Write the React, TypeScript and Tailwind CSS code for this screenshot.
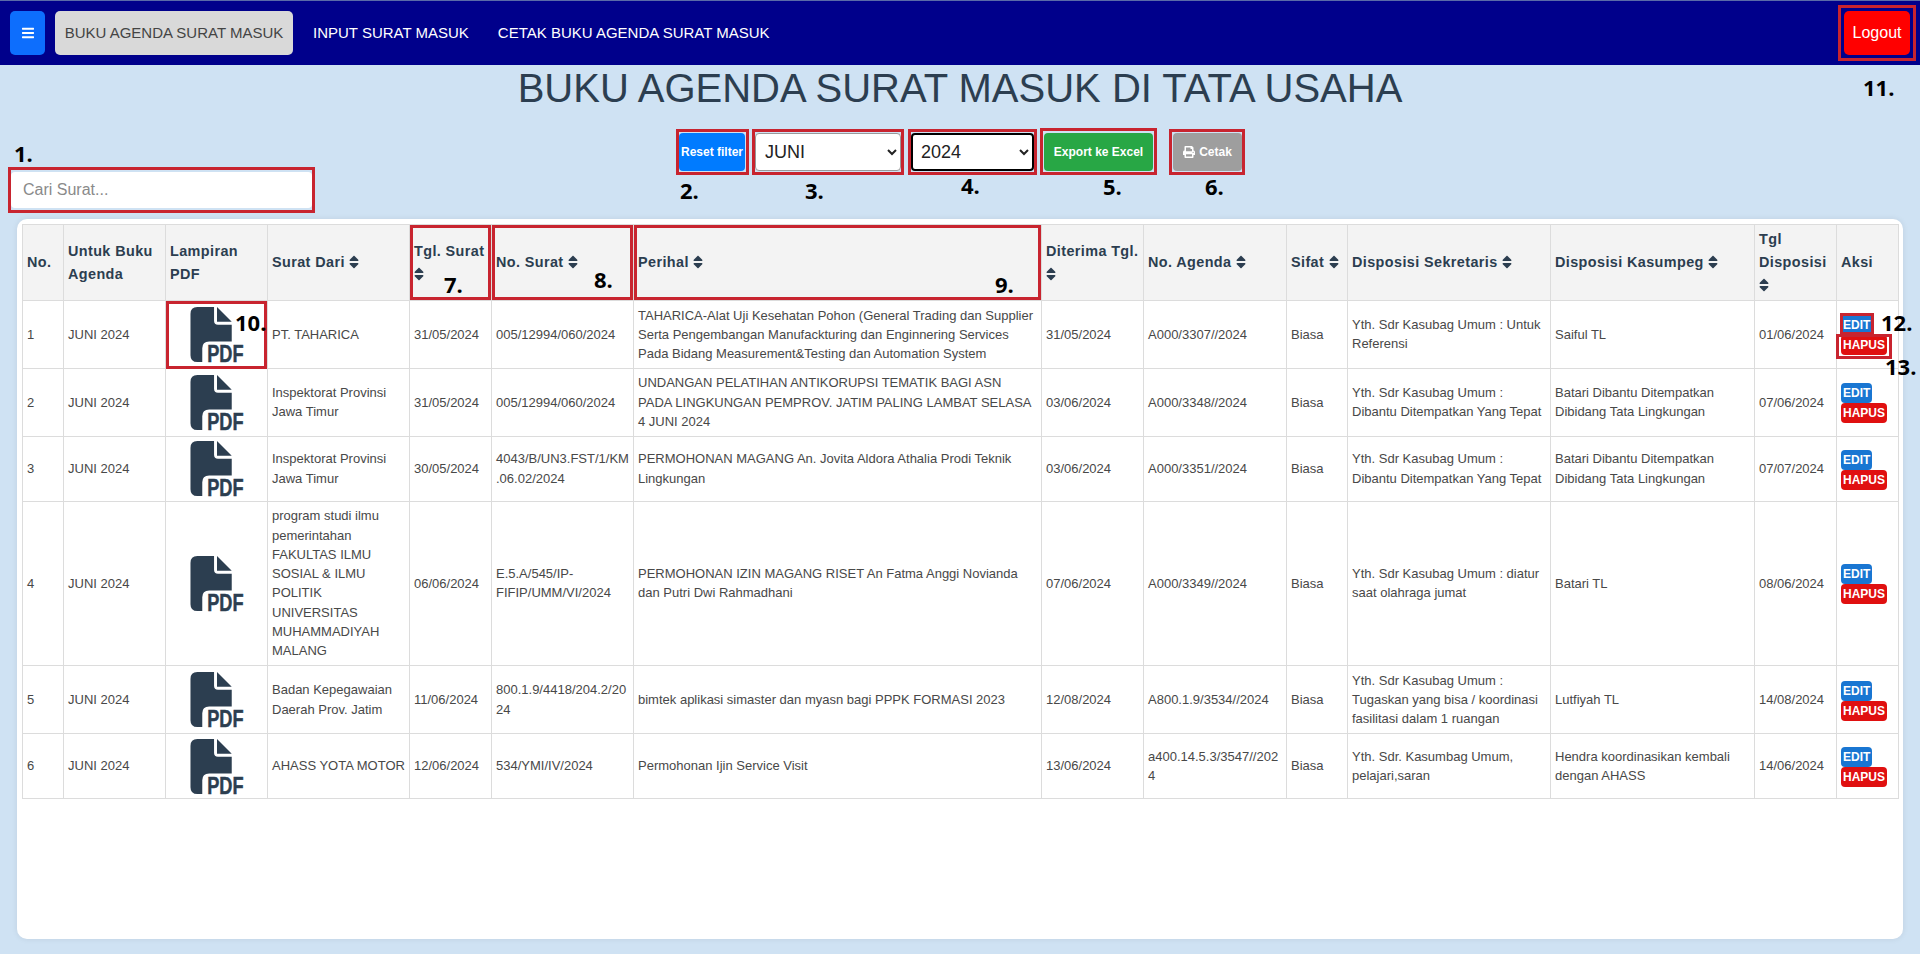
import { FaBars, FaPrint, FaSort } from "react-icons/fa";

type Row = {
  no: number;
  dari: string;
  tgl: string;
  noSurat: string;
  perihal: string;
  diterima: string;
  agenda: string;
  sekretaris: string;
  kasumpeg: string;
  tglDisposisi: string;
};

const rows: Row[] = [
  {
    no: 1,
    dari: "PT. TAHARICA",
    tgl: "31/05/2024",
    noSurat: "005/12994/060/2024",
    perihal:
      "TAHARICA-Alat Uji Kesehatan Pohon (General Trading dan Supplier Serta Pengembangan Manufackturing dan Enginnering Services Pada Bidang Measurement&Testing dan Automation System",
    diterima: "31/05/2024",
    agenda: "A000/3307//2024",
    sekretaris: "Yth. Sdr Kasubag Umum : Untuk Referensi",
    kasumpeg: "Saiful TL",
    tglDisposisi: "01/06/2024",
  },
  {
    no: 2,
    dari: "Inspektorat Provinsi Jawa Timur",
    tgl: "31/05/2024",
    noSurat: "005/12994/060/2024",
    perihal:
      "UNDANGAN PELATIHAN ANTIKORUPSI TEMATIK BAGI ASN PADA LINGKUNGAN PEMPROV. JATIM PALING LAMBAT SELASA 4 JUNI 2024",
    diterima: "03/06/2024",
    agenda: "A000/3348//2024",
    sekretaris: "Yth. Sdr Kasubag Umum : Dibantu Ditempatkan Yang Tepat",
    kasumpeg: "Batari Dibantu Ditempatkan Dibidang Tata Lingkungan",
    tglDisposisi: "07/06/2024",
  },
  {
    no: 3,
    dari: "Inspektorat Provinsi Jawa Timur",
    tgl: "30/05/2024",
    noSurat: "4043/B/UN3.FST/1/KM.06.02/2024",
    perihal: "PERMOHONAN MAGANG An. Jovita Aldora Athalia Prodi Teknik Lingkungan",
    diterima: "03/06/2024",
    agenda: "A000/3351//2024",
    sekretaris: "Yth. Sdr Kasubag Umum : Dibantu Ditempatkan Yang Tepat",
    kasumpeg: "Batari Dibantu Ditempatkan Dibidang Tata Lingkungan",
    tglDisposisi: "07/07/2024",
  },
  {
    no: 4,
    dari: "program studi ilmu pemerintahan FAKULTAS ILMU SOSIAL & ILMU POLITIK UNIVERSITAS MUHAMMADIYAH MALANG",
    tgl: "06/06/2024",
    noSurat: "E.5.A/545/IP-FIFIP/UMM/VI/2024",
    perihal: "PERMOHONAN IZIN MAGANG RISET An Fatma Anggi Novianda dan Putri Dwi Rahmadhani",
    diterima: "07/06/2024",
    agenda: "A000/3349//2024",
    sekretaris: "Yth. Sdr Kasubag Umum : diatur saat olahraga jumat",
    kasumpeg: "Batari TL",
    tglDisposisi: "08/06/2024",
  },
  {
    no: 5,
    dari: "Badan Kepegawaian Daerah Prov. Jatim",
    tgl: "11/06/2024",
    noSurat: "800.1.9/4418/204.2/2024",
    perihal: "bimtek aplikasi simaster dan myasn bagi PPPK FORMASI 2023",
    diterima: "12/08/2024",
    agenda: "A800.1.9/3534//2024",
    sekretaris: "Yth. Sdr Kasubag Umum : Tugaskan yang bisa / koordinasi fasilitasi dalam 1 ruangan",
    kasumpeg: "Lutfiyah TL",
    tglDisposisi: "14/08/2024",
  },
  {
    no: 6,
    dari: "AHASS YOTA MOTOR",
    tgl: "12/06/2024",
    noSurat: "534/YMI/IV/2024",
    perihal: "Permohonan Ijin Service Visit",
    diterima: "13/06/2024",
    agenda: "a400.14.5.3/3547//2024",
    sekretaris: "Yth. Sdr. Kasumbag Umum, pelajari,saran",
    kasumpeg: "Hendra koordinasikan kembali dengan AHASS",
    tglDisposisi: "14/06/2024",
  },
];

const th = "border border-[#dcdcdc] bg-[#f3f3f3] px-[4px] py-[3px] text-left align-middle font-bold";
const td = "border border-[#dcdcdc] px-[4px] py-[4.5px] align-middle";

const boxes = [
  "left-[8px] top-[167px] w-[307px] h-[46px]",
  "left-[676px] top-[129px] w-[73px] h-[46px]",
  "left-[752px] top-[129px] w-[152px] h-[46px]",
  "left-[908px] top-[129px] w-[129px] h-[46px]",
  "left-[1040px] top-[128px] w-[117px] h-[47px]",
  "left-[1169px] top-[129px] w-[76px] h-[46px]",
  "left-[410px] top-[225px] w-[81px] h-[75px]",
  "left-[492px] top-[225px] w-[141px] h-[75px]",
  "left-[634px] top-[225px] w-[407px] h-[75px]",
  "left-[166px] top-[301px] w-[101px] h-[68px]",
  "left-[1838px] top-[5px] w-[78px] h-[56px]",
  "left-[1840px] top-[313px] w-[34px] h-[22px]",
  "left-[1836px] top-[334px] w-[56px] h-[25px]",
];

const labels = [
  { text: "1.", pos: "left-[14px] top-[140px]" },
  { text: "2.", pos: "left-[680px] top-[177px]" },
  { text: "3.", pos: "left-[805px] top-[177px]" },
  { text: "4.", pos: "left-[961px] top-[172px]" },
  { text: "5.", pos: "left-[1103px] top-[173px]" },
  { text: "6.", pos: "left-[1205px] top-[173px]" },
  { text: "7.", pos: "left-[444px] top-[271px]" },
  { text: "8.", pos: "left-[594px] top-[266px]" },
  { text: "9.", pos: "left-[995px] top-[271px]" },
  { text: "10.", pos: "left-[235px] top-[309px]" },
  { text: "11.", pos: "left-[1863px] top-[74px]" },
  { text: "12.", pos: "left-[1881px] top-[309px]" },
  { text: "13.", pos: "left-[1885px] top-[353px]" },
];

function SortIcon() {
  return <FaSort className="inline-block h-[16px] w-[10px] align-[-3px] text-[#2c3e50]" />;
}

function PdfIcon() {
  return (
    <svg viewBox="0 0 54 56" className="mx-auto block h-[55px] w-[54px] overflow-visible">
      <path
        fill="#2c3e50"
        d="M7 0H24V14Q24 18 28 18H42V35H19Q12 35 12 42V56H7Q0 56 0 49V7Q0 0 7 0Z"
      />
      <path fill="#2c3e50" d="M27 0L42 15H27Z" />
      <text
        x="17"
        y="55.5"
        fill="#2c3e50"
        stroke="#2c3e50"
        strokeWidth="0.5"
        fontFamily="'Liberation Sans',sans-serif"
        fontSize="25"
        fontWeight="700"
        textLength="37"
        lengthAdjust="spacingAndGlyphs"
      >
        PDF
      </text>
    </svg>
  );
}

function Header() {
  return (
    <nav className="flex h-[65px] items-center border-t border-[#5a6aa8] bg-[#00008b] px-[10px]">
      <button className="flex h-[44px] w-[35px] items-center justify-center rounded-[5px] bg-[#0d6efd] text-white">
        <FaBars className="h-[14px] w-[12px]" />
      </button>
      <a className="ml-[10px] flex h-[44px] w-[238px] items-center justify-center rounded-[5px] bg-[#d9d9d9] text-[15px] text-[#444]">
        BUKU AGENDA SURAT MASUK
      </a>
      <a className="ml-[20px] text-[15px] text-white">INPUT SURAT MASUK</a>
      <a className="ml-[29px] text-[15px] text-white">CETAK BUKU AGENDA SURAT MASUK</a>
      <button className="ml-auto h-[44px] w-[66px] rounded-[5px] bg-[#ff0000] text-[16px] text-white">Logout</button>
    </nav>
  );
}

function Filters() {
  return (
    <div className="flex h-[38px] justify-center pl-[1px]">
      <button className="h-[38px] w-[66px] rounded-[4px] bg-[#007bff] text-[12px] font-bold whitespace-nowrap text-white">
        Reset filter
      </button>
      <select
        defaultValue="JUNI"
        className="ml-[10px] h-[38px] w-[146px] rounded-[4px] border border-[#999] bg-white px-[5px] text-[18px] text-[#222]"
      >
        <option>JUNI</option>
      </select>
      <select
        defaultValue="2024"
        className="ml-[10px] h-[38px] w-[123px] rounded-[4px] border-2 border-black bg-white px-[4px] text-[18px] text-[#222]"
      >
        <option>2024</option>
      </select>
      <button className="ml-[10px] h-[38px] w-[109px] rounded-[4px] bg-[#28a745] text-[12px] font-bold text-white">
        Export ke Excel
      </button>
      <button className="ml-[20px] flex h-[38px] w-[69px] items-center justify-center gap-[4px] rounded-[4px] bg-[#9e9e9e] text-[12px] font-bold text-white">
        <FaPrint className="h-[12px] w-[12px]" />
        Cetak
      </button>
    </div>
  );
}

function SuratTable() {
  return (
    <table className="w-[1876px] table-fixed border-collapse text-[13px] leading-[19.3px] text-[#484848]">
      <colgroup>
        <col className="w-[41px]" />
        <col className="w-[102px]" />
        <col className="w-[102px]" />
        <col className="w-[142px]" />
        <col className="w-[82px]" />
        <col className="w-[142px]" />
        <col className="w-[408px]" />
        <col className="w-[102px]" />
        <col className="w-[143px]" />
        <col className="w-[61px]" />
        <col className="w-[203px]" />
        <col className="w-[204px]" />
        <col className="w-[82px]" />
        <col className="w-[62px]" />
      </colgroup>
      <thead className="text-[14.4px] leading-[23px] tracking-[0.4px] text-[#2c3e50]">
        <tr className="h-[76px]">
          <th className={th}>No.</th>
          <th className={th}>Untuk Buku Agenda</th>
          <th className={th}>Lampiran PDF</th>
          <th className={th}>
            Surat Dari <SortIcon />
          </th>
          <th className={th}>
            Tgl. Surat <SortIcon />
          </th>
          <th className={th}>
            No. Surat <SortIcon />
          </th>
          <th className={th}>
            Perihal <SortIcon />
          </th>
          <th className={th}>
            Diterima Tgl. <SortIcon />
          </th>
          <th className={th}>
            No. Agenda <SortIcon />
          </th>
          <th className={th}>
            Sifat <SortIcon />
          </th>
          <th className={th}>
            Disposisi Sekretaris <SortIcon />
          </th>
          <th className={th}>
            Disposisi Kasumpeg <SortIcon />
          </th>
          <th className={th}>
            Tgl Disposisi <SortIcon />
          </th>
          <th className={th}>Aksi</th>
        </tr>
      </thead>
      <tbody>
        {rows.map((r) => (
          <tr key={r.no}>
            <td className={td}>{r.no}</td>
            <td className={td}>JUNI 2024</td>
            <td className="border border-[#dcdcdc] px-[4px] py-[4.5px] align-middle">
              <PdfIcon />
            </td>
            <td className={td}>{r.dari}</td>
            <td className={td}>{r.tgl}</td>
            <td className={td + " break-words"}>{r.noSurat}</td>
            <td className={td}>{r.perihal}</td>
            <td className={td}>{r.diterima}</td>
            <td className={td + " break-words"}>{r.agenda}</td>
            <td className={td}>Biasa</td>
            <td className={td}>{r.sekretaris}</td>
            <td className={td}>{r.kasumpeg}</td>
            <td className={td}>{r.tglDisposisi}</td>
            <td className="border border-[#dcdcdc] px-[4px] pt-[5px] pb-[3px] align-middle">
              <div className="flex flex-col items-start">
                <span className="h-[20px] rounded-[4px] bg-[#1976d2] px-[2px] text-[12px] leading-[20px] font-bold text-white">
                  EDIT
                </span>
                <span className="h-[20px] rounded-[4px] bg-[#e01010] px-[2px] text-[12px] leading-[20px] font-bold text-white">
                  HAPUS
                </span>
              </div>
            </td>
          </tr>
        ))}
      </tbody>
    </table>
  );
}

export default function App() {
  return (
    <div className="relative min-h-[954px] bg-[#cfe2f3] font-['Liberation_Sans',Arial,sans-serif]">
      <Header />
      <h1 className="h-[68px] text-center text-[40px] leading-[46px] font-normal text-[#2c3e50]">
        BUKU AGENDA SURAT MASUK DI TATA USAHA
      </h1>
      <Filters />
      <div className="mt-[1px] ml-[11px] w-[301px]">
        <input
          placeholder="Cari Surat..."
          className="h-[36px] w-full rounded-[4px] bg-white px-[12px] text-[16px] outline-none placeholder:text-[#8a8a8a]"
        />
      </div>
      <main className="mt-[11px] ml-[17px] h-[720px] w-[1886px] rounded-[10px] bg-white p-[5px] shadow-[0_0_6px_rgba(0,0,0,0.08)]">
        <SuratTable />
      </main>
      {boxes.map((b) => (
        <div key={b} className={"pointer-events-none absolute border-[3px] border-[#c8242f] " + b} />
      ))}
      {labels.map((l) => (
        <span
          key={l.text}
          className={"absolute font-['Open_Sans',sans-serif] text-[22px] leading-[27px] font-bold text-black " + l.pos}
        >
          {l.text}
        </span>
      ))}
    </div>
  );
}
